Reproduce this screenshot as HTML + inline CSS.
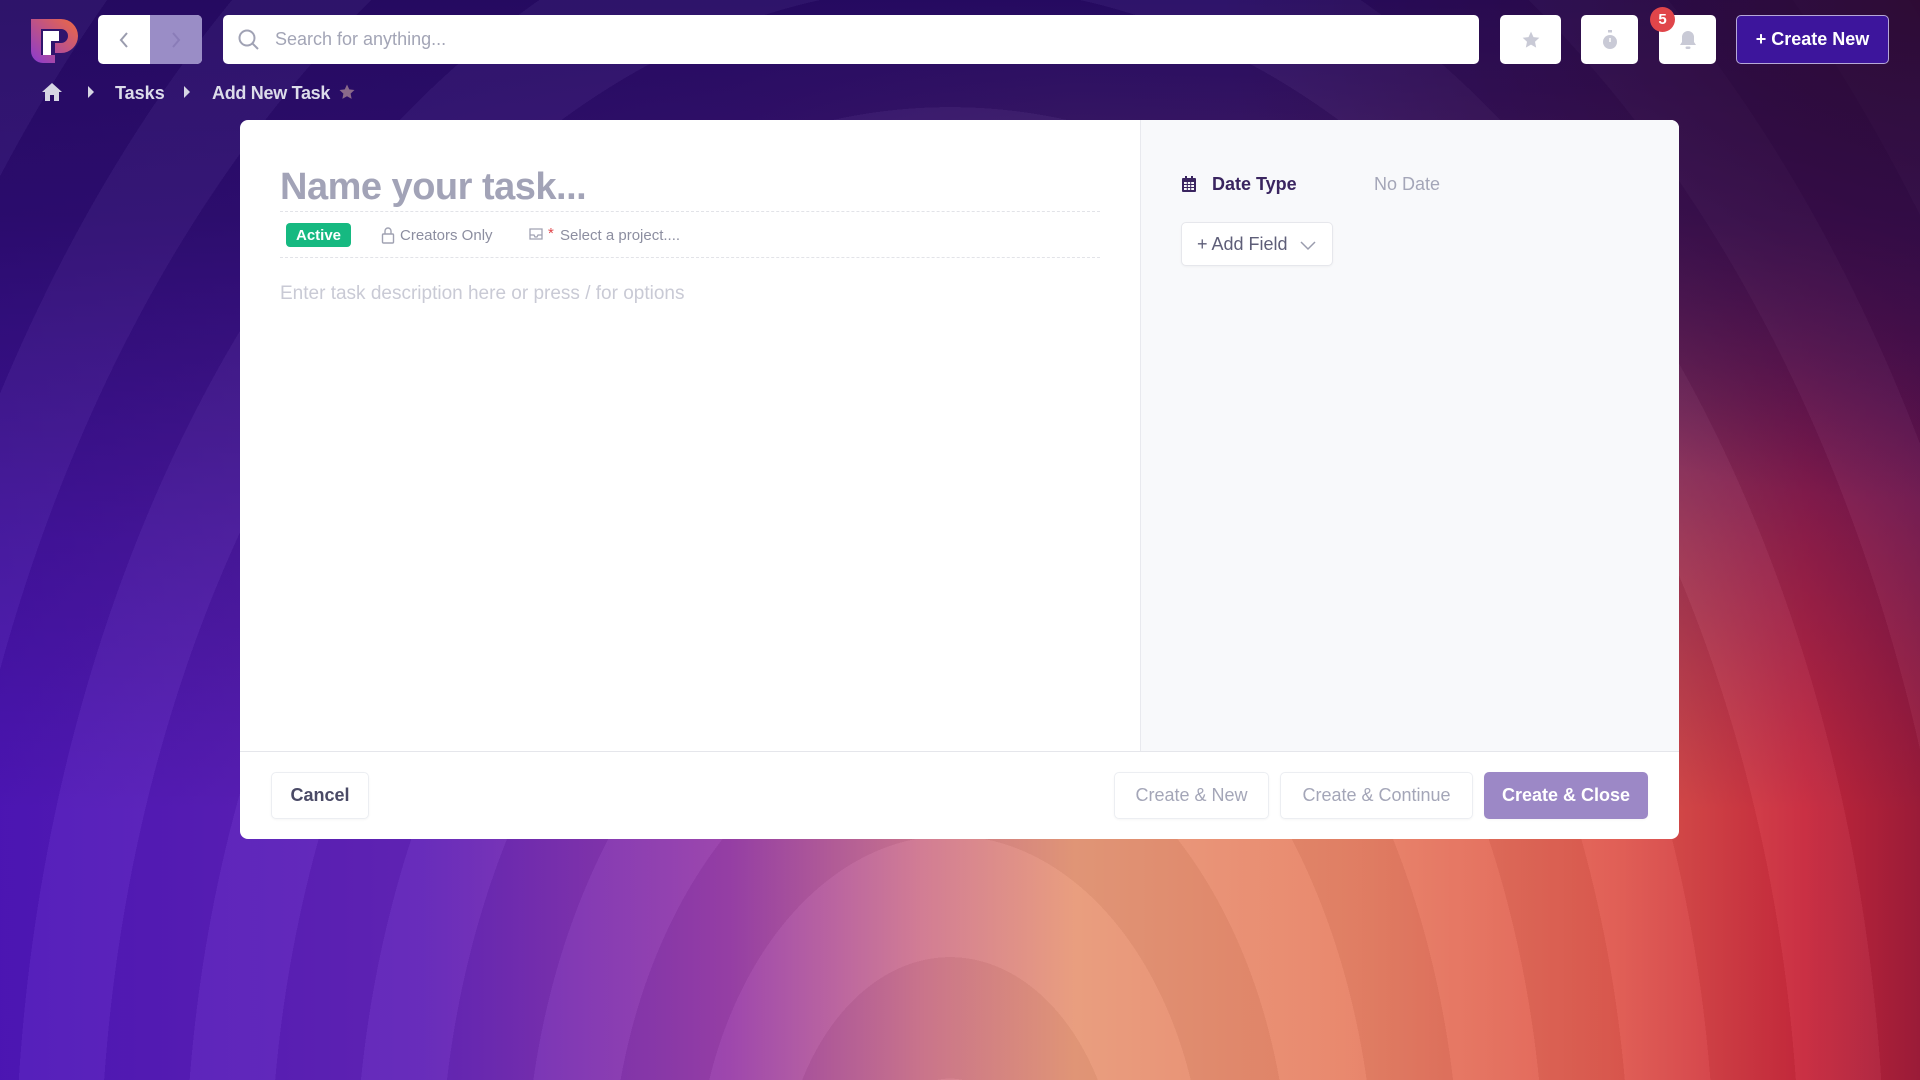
<!DOCTYPE html>
<html><head><meta charset="utf-8"><style>
*{box-sizing:border-box;margin:0;padding:0}
body{width:1920px;height:1080px;overflow:hidden;font-family:"Liberation Sans",sans-serif;position:relative;
background:
linear-gradient(180deg,rgba(38,10,100,1) 0%,rgba(38,10,100,0.85) 20%,rgba(38,10,100,0.35) 50%,rgba(38,10,100,0) 75%),
linear-gradient(90deg,#4e16b8 0%,#6224b8 22%,#9a40aa 38%,#d07890 48%,#e89a7a 56%,#e88468 70%,#e05a50 84%,#c8283c 94%,#a01c3a 100%);}
.rings{position:absolute;inset:0;background:repeating-radial-gradient(ellipse 700px 1000px at 950px 1200px,rgba(255,255,255,0.04) 0 85px,rgba(0,0,0,0.035) 85px 170px);}
.tr{position:absolute;inset:0;background:radial-gradient(ellipse 700px 500px at 1920px 0,rgba(46,11,50,0.95),rgba(46,11,50,0) 100%);}
.abs{position:absolute}
.wbtn{position:absolute;background:#fff;border-radius:5px;top:15px;height:49px;display:flex;align-items:center;justify-content:center}
.card{position:absolute;left:240px;top:120px;width:1439px;height:719px;background:#fff;border-radius:8px;overflow:hidden}
.side{position:absolute;left:900px;top:0;width:539px;height:631px;background:#f8f9fb;border-left:1px solid #e8e9ee}
.foot{position:absolute;left:0;top:631px;width:100%;height:88px;border-top:1px solid #e5e6eb}
.fb{position:absolute;top:20px;height:47px;border:1px solid #eceef2;border-radius:5px;display:flex;align-items:center;justify-content:center;font-size:18px;color:#a4a6b8;box-shadow:0 1px 2px rgba(0,0,0,0.04)}
</style></head><body>
<div class="rings"></div><div class="tr"></div>
<svg class="abs" style="left:29px;top:17px" width="50" height="48" viewBox="0 0 50 48">
<defs><linearGradient id="lg" x1="0" y1="1" x2="1" y2="0"><stop offset="0" stop-color="#8a3ad0"/><stop offset="1" stop-color="#f06a40"/></linearGradient></defs>
<path d="M2 2 H32 A17 17 0 0 1 32 36 H26 V26 H32 A7 7 0 0 0 32 12 H12 V38 H26 V46 H14 A12 12 0 0 1 2 34 Z" fill="url(#lg)"/>
<path d="M14 14 H30 V24 H22 V38 H14 Z" fill="#fff"/>
</svg>
<div class="wbtn" style="left:98px;width:104px;overflow:hidden;justify-content:flex-start">
<div style="width:52px;height:49px;display:flex;align-items:center;justify-content:center"><svg width="14" height="20" viewBox="0 0 14 20"><path d="M10 3 L4 10 L10 17" stroke="#9a9cae" stroke-width="2" fill="none"/></svg></div>
<div style="width:52px;height:49px;background:#9a8dc6;display:flex;align-items:center;justify-content:center"><svg width="14" height="20" viewBox="0 0 14 20"><path d="M4 3 L10 10 L4 17" stroke="#8a7cb8" stroke-width="2" fill="none"/></svg></div>
</div>
<div class="wbtn" style="left:223px;width:1256px;justify-content:flex-start;padding-left:14px">
<svg width="24" height="24" viewBox="0 0 24 24"><circle cx="10" cy="10" r="7.5" stroke="#a0a2b4" stroke-width="2" fill="none"/><path d="M15.5 15.5 L21 21" stroke="#a0a2b4" stroke-width="2"/></svg>
<span style="margin-left:14px;font-size:18px;color:#a3a5b6">Search for anything...</span></div>
<div class="wbtn" style="left:1500px;width:61px"><svg width="20" height="20" viewBox="0 0 24 24"><path d="M12 2l3 6.5 7 .8-5.2 4.8 1.4 7L12 17.6 5.8 21.1l1.4-7L2 9.3l7-.8z" fill="#c9cad6"/></svg></div>
<div class="wbtn" style="left:1581px;width:57px"><svg width="18" height="20" viewBox="0 0 18 20"><rect x="7" y="0" width="4" height="2.5" fill="#c9cad6"/><circle cx="9" cy="12" r="7" fill="#c9cad6"/><path d="M9 8v4" stroke="#fff" stroke-width="1.5"/></svg></div>
<div class="wbtn" style="left:1659px;width:57px"><svg width="18" height="20" viewBox="0 0 18 20"><path d="M9 1a6 6 0 0 1 6 6v5l2 3H1l2-3V7a6 6 0 0 1 6-6z" fill="#c9cad6"/><rect x="6.5" y="16.5" width="5" height="2.5" rx="1.2" fill="#c9cad6"/></svg></div>
<div class="abs" style="left:1650px;top:7px;width:25px;height:25px;border-radius:50%;background:#e0454a;color:#fff;font-size:15px;font-weight:bold;display:flex;align-items:center;justify-content:center">5</div>
<div class="abs" style="left:1736px;top:15px;width:153px;height:49px;border-radius:5px;background:#3d159c;border:1px solid #b6a8d8;color:#fff;font-size:18px;font-weight:bold;display:flex;align-items:center;justify-content:center">+ Create New</div>
<svg class="abs" style="left:41px;top:82px" width="22" height="20" viewBox="0 0 22 20"><path d="M11 1 L21 10 H18 V19 H13 V13 H9 V19 H4 V10 H1 Z" fill="#d6d6e4"/></svg>
<svg class="abs" style="left:86px;top:85px" width="10" height="14" viewBox="0 0 10 14"><path d="M2 1 L8 7 L2 13Z" fill="#d6d6e4"/></svg>
<div class="abs" style="left:115px;top:83px;font-size:18px;font-weight:bold;color:#dcdcea">Tasks</div>
<svg class="abs" style="left:182px;top:85px" width="10" height="14" viewBox="0 0 10 14"><path d="M2 1 L8 7 L2 13Z" fill="#d6d6e4"/></svg>
<div class="abs" style="left:212px;top:83px;font-size:18px;font-weight:bold;color:#dcdcea;letter-spacing:-0.3px">Add New Task</div>
<svg class="abs" style="left:338px;top:83px" width="18" height="18" viewBox="0 0 24 24"><path d="M12 2l3 6.5 7 .8-5.2 4.8 1.4 7L12 17.6 5.8 21.1l1.4-7L2 9.3l7-.8z" fill="#8a6a8a"/></svg>
<div class="card">
<div class="abs" style="left:40px;top:46px;font-size:38px;font-weight:bold;color:#a2a3b7;letter-spacing:-0.5px">Name your task...</div>
<div class="abs" style="left:40px;top:91px;width:820px;border-top:1px dashed #e2e3e8"></div>
<div class="abs" style="left:46px;top:103px;width:65px;height:24px;border-radius:4px;background:#16b981;color:#fff;font-size:15px;font-weight:bold;display:flex;align-items:center;justify-content:center">Active</div>
<svg class="abs" style="left:141px;top:106px" width="14" height="18" viewBox="0 0 14 18"><rect x="1.5" y="8" width="11" height="9" rx="1" stroke="#a0a2b2" stroke-width="1.4" fill="none"/><path d="M4 8V5a3 3 0 0 1 6 0v3" stroke="#a0a2b2" stroke-width="1.4" fill="none"/></svg>
<div class="abs" style="left:160px;top:107px;font-size:15px;color:#8c8ea0">Creators Only</div>
<svg class="abs" style="left:288px;top:106px" width="16" height="16" viewBox="0 0 16 16"><path d="M2 3h12v10H2z M2 9h4l1 2h2l1-2h4" stroke="#a0a2b2" stroke-width="1.3" fill="none"/></svg>
<div class="abs" style="left:308px;top:105px;font-size:15px;color:#e0454a">*</div>
<div class="abs" style="left:320px;top:107px;font-size:15px;color:#8c8ea0">Select a project....</div>
<div class="abs" style="left:40px;top:137px;width:820px;border-top:1px dashed #e2e3e8"></div>
<div class="abs" style="left:40px;top:163px;font-size:19px;color:#c9cad5">Enter task description here or press / for options</div>
<div class="side">
<svg class="abs" style="left:40px;top:56px" width="16" height="17" viewBox="0 0 16 17"><rect x="1" y="2" width="14" height="14" rx="1" fill="#3a2560"/><rect x="3" y="6" width="10" height="8" fill="#f8f9fb"/><path d="M3 8.5h10M3 11.5h10M6.3 6v8M9.7 6v8" stroke="#3a2560" stroke-width="1"/><rect x="4" y="0" width="2" height="3" fill="#3a2560"/><rect x="10" y="0" width="2" height="3" fill="#3a2560"/></svg>
<div class="abs" style="left:71px;top:54px;font-size:18px;font-weight:bold;color:#3a2560">Date Type</div>
<div class="abs" style="left:233px;top:54px;font-size:18px;color:#a4a6b8">No Date</div>
<div class="abs" style="left:40px;top:102px;width:152px;height:44px;background:#fff;border:1px solid #e6e7ec;border-radius:5px;box-shadow:0 1px 2px rgba(0,0,0,0.04);font-size:18px;color:#5e5e78;display:flex;align-items:center;padding-left:15px">+ Add Field<svg style="margin-left:12px;margin-top:4px" width="16" height="10" viewBox="0 0 16 10"><path d="M1 1l7 7 7-7" stroke="#9a9cae" stroke-width="1.5" fill="none"/></svg></div>
</div>
<div class="foot">
<div class="fb" style="left:31px;width:98px;color:#4a4a66;font-weight:bold">Cancel</div>
<div class="fb" style="left:874px;width:155px">Create &amp; New</div>
<div class="fb" style="left:1040px;width:193px">Create &amp; Continue</div>
<div class="fb" style="left:1244px;width:164px;background:#9c88c6;border-color:#9c88c6;color:#fff;font-weight:bold">Create &amp; Close</div>
</div>
</div>
</body></html>
